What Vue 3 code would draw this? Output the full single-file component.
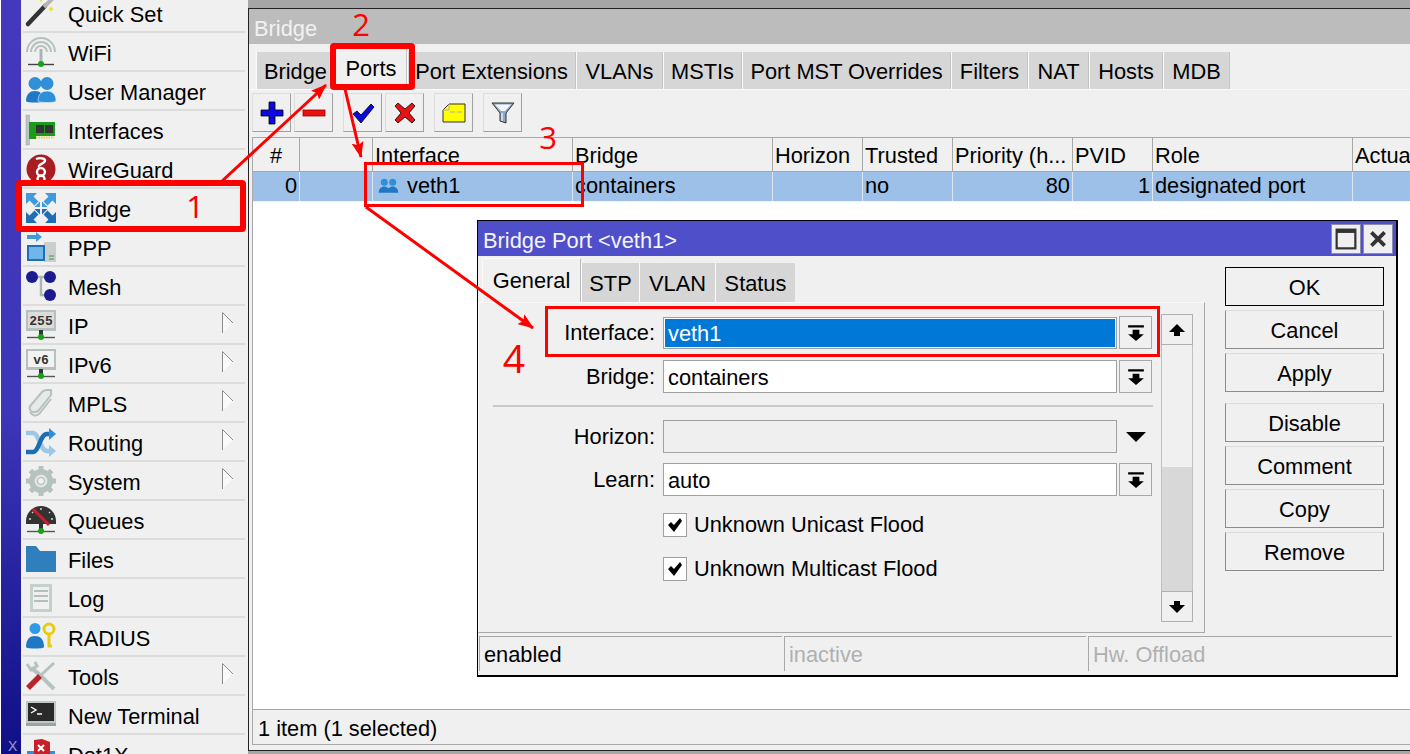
<script setup>
const menu = [
  { n: 'Quick Set', i: 'wand' }, { n: 'WiFi', i: 'wifi' }, { n: 'User Manager', i: 'users' },
  { n: 'Interfaces', i: 'card' }, { n: 'WireGuard', i: 'wg' }, { n: 'Bridge', i: 'bridge' },
  { n: 'PPP', i: 'ppp' }, { n: 'Mesh', i: 'mesh' }, { n: 'IP', i: 'ip', sub: true, t: '255' },
  { n: 'IPv6', i: 'ip', sub: true, t: 'v6' }, { n: 'MPLS', i: 'mpls', sub: true },
  { n: 'Routing', i: 'routing', sub: true }, { n: 'System', i: 'gear', sub: true },
  { n: 'Queues', i: 'queues' }, { n: 'Files', i: 'files' }, { n: 'Log', i: 'log' },
  { n: 'RADIUS', i: 'radius' }, { n: 'Tools', i: 'tools', sub: true },
  { n: 'New Terminal', i: 'term' }, { n: 'Dot1X', i: 'dot' }
]
const tabs = ['Bridge', 'Ports', 'Port Extensions', 'VLANs', 'MSTIs', 'Port MST Overrides', 'Filters', 'NAT', 'Hosts', 'MDB']
const heads = ['#', '', 'Interface', 'Bridge', 'Horizon', 'Trusted', 'Priority (h...', 'PVID', 'Role', 'Actual Pa']
const dlgTabs = ['STP', 'VLAN', 'Status']
const mainBtns = ['OK', 'Cancel', 'Apply']
const moreBtns = ['Disable', 'Comment', 'Copy', 'Remove']
</script>

<template>
  <div class="screen">
    <aside class="strip"><span class="strip-x">X</span></aside>
    <nav class="menu">
      <div v-for="m in menu" :key="m.n" class="mi">
        <svg class="mi-ic" viewBox="0 0 30 30">
          <template v-if="m.i === 'wand'">
            <path d="M2 26 L19 8" stroke="#333" stroke-width="4.500" stroke-linecap="round" />
            <path d="M18 9 L27 0" stroke="#b5b5b5" stroke-width="4" />
            <path d="M15 -3l1 3 3 1-3 1-1 3-1-3-3-1 3-1zM25 8l.9 2.100 2.100.9-2.100.9-.9 2.100-.9-2.100-2.100-.9 2.100-.9z" fill="#eedc20" />
          </template>
          <template v-else-if="m.i === 'wifi'">
            <path d="M1 15a14 14 0 0 1 28 0M5 15a10 10 0 0 1 20 0M9 15a6 6 0 0 1 12 0" fill="none" stroke="#b4c2bd" stroke-width="2" />
            <rect x="13.500" y="12" width="3" height="14" fill="#a8b5b0" />
            <path d="M2 27.500h26" stroke="#444" stroke-width="1.400" />
            <circle cx="15" cy="27" r="3" fill="#17a317" />
          </template>
          <template v-else-if="m.i === 'users'">
            <circle cx="9" cy="7.500" r="6.500" fill="#2f8fd8" /><circle cx="21" cy="7.500" r="6.500" fill="#2f8fd8" />
            <path d="M0 25c0-7 4-10 9-10s9 3 9 10c0 2-18 2-18 0z" fill="#1f78c4" />
            <path d="M12 25c0-7 4-10 9-10s9 3 9 10c0 2-18 2-18 0z" fill="#2f8fd8" stroke="#f0f0f0" stroke-width=".6" />
          </template>
          <template v-else-if="m.i === 'card'">
            <rect x="0" y="0" width="3.500" height="30" fill="#b8c6c0" stroke="#92a09a" stroke-width=".5" />
            <path d="M3 7h26v14H10v3H3z" fill="#1c9a1c" />
            <rect x="10" y="10" width="8" height="8" fill="#333" /><rect x="19" y="10" width="8" height="8" fill="#333" />
            <path d="M10 22.500h18" stroke="#e3d23c" stroke-width="2" stroke-dasharray="1.500 1" />
          </template>
          <template v-else-if="m.i === 'wg'">
            <circle cx="15" cy="15" r="14.500" fill="#a81c22" />
            <path d="M10 5c5-2 10 0 9 2-1 3-7 3-6 6M15 14a4 4 0 1 1-.1 0M15 21.500a3.500 3.500 0 1 0 .1 0" fill="none" stroke="#fff" stroke-width="2.400" />
          </template>
          <template v-else-if="m.i === 'bridge'">
            <path d="M0 0h11L7.500 3.500l5 5-4 4-5-5L0 11zM30 0H19l3.500 3.500-5 5 4 4 5-5L30 11z" fill="#3f9ade" />
            <path d="M0 30h11l-3.500-3.500 5-5-4-4-5 5L0 19zM30 30H19l3.500-3.500-5-5 4-4 5 5L30 19z" fill="#1f6db5" />
            <path d="M14 14V8.500L8.500 14zM16 14V8.500L21.500 14z" fill="#3f9ade" />
            <path d="M14 16v5.500L8.500 16zM16 16v5.500L21.500 16z" fill="#1f6db5" />
          </template>
          <template v-else-if="m.i === 'ppp'">
            <path d="M1 3h9V0l6 5-6 5V7H1z" fill="#3f9ade" />
            <rect x="18" y="10" width="12" height="20" fill="#c8cfcc" /><path d="M23 24h5M23 27h5" stroke="#3b9e3b" />
            <rect x="1" y="13" width="18" height="16" fill="#1f6db5" /><rect x="3" y="15" width="14" height="12" fill="#6fb7ea" />
          </template>
          <template v-else-if="m.i === 'mesh'">
            <path d="M6 6h18M15 6v18h9" fill="none" stroke="#a9b7b2" stroke-width="2.400" />
            <circle cx="6" cy="6" r="6" fill="#1b1b8f" /><circle cx="24" cy="6" r="6" fill="#1b1b8f" /><circle cx="24" cy="24" r="6" fill="#1b1b8f" />
          </template>
          <template v-else-if="m.i === 'ip'">
            <rect x="0" y="0" width="30" height="21" fill="#b4c2bd" /><rect x="2" y="2" width="26" height="16" :fill="m.t === 'v6' ? '#f2f2f2' : '#dcdcdc'" />
            <text x="15" y="14.500" text-anchor="middle" class="ip-t">{{ m.t }}</text>
            <rect x="13" y="20" width="4" height="7" fill="#333" />
            <path d="M1 27.500h28" stroke="#555" stroke-width="1.400" /><circle cx="15" cy="27" r="3" fill="#17a317" />
          </template>
          <template v-else-if="m.i === 'mpls'">
            <path d="M5 17 L16 4 Q18 2 21 2 L25 2 V7 L13 22 Q9 26 5 23 Q2 20 5 17z" fill="#e6ebe9" stroke="#b5c1bc" stroke-width="2" />
            <path d="M4 24 Q8 30 13 26 L25 11" fill="none" stroke="#b5c1bc" stroke-width="2" />
          </template>
          <template v-else-if="m.i === 'routing'">
            <path d="M0 6h7c6 0 7 18 14 18h3" fill="none" stroke="#9cc7e5" stroke-width="4.500" />
            <path d="M23 18l7 6-7 6z" fill="#9cc7e5" />
            <path d="M0 25h7c6 0 7-18 14-18h3" fill="none" stroke="#1b6eb2" stroke-width="4.500" />
            <path d="M23 1l7 6-7 6z" fill="#2f8fd8" />
          </template>
          <template v-else-if="m.i === 'gear'">
            <circle cx="15" cy="15" r="9" fill="none" stroke="#b5c2bd" stroke-width="6" />
            <path d="M15 0v30M0 15h30M4.400 4.400l21.200 21.200M25.600 4.400 4.400 25.600" stroke="#b5c2bd" stroke-width="5" stroke-dasharray="5 20 5" />
            <circle cx="15" cy="15" r="6.500" fill="#dfe5e2" /><circle cx="15" cy="15" r="3.500" fill="#f0f0f0" stroke="#a9b7b2" />
          </template>
          <template v-else-if="m.i === 'queues'">
            <path d="M0 16a15 15 0 0 1 30 0v3H0z" fill="#333" />
            <path d="M15 3v2M6 7l1 1M24 7l-1 1M3 14h2M27 14h-2" stroke="#ddd" stroke-width="1.400" />
            <path d="M7 4l16 16" stroke="#c8202a" stroke-width="3" />
            <path d="M1 26.500h28" stroke="#555" stroke-width="1.400" /><rect x="13" y="19" width="4" height="6" fill="#333" />
            <circle cx="15" cy="26" r="3" fill="#17a317" />
          </template>
          <template v-else-if="m.i === 'files'">
            <path d="M0 2h10l4 5h16v21H0z" fill="#2f7fbd" /><path d="M13 5.500h15" stroke="#e8f2f8" />
          </template>
          <template v-else-if="m.i === 'log'">
            <rect x="4" y="1" width="22" height="28" fill="#c4d0cb" /><rect x="7" y="4" width="16" height="22" fill="#f0f0f0" />
            <path d="M8 8h14M8 13h14M8 18h14" stroke="#b3bfba" stroke-width="2" />
          </template>
          <template v-else-if="m.i === 'radius'">
            <circle cx="9" cy="6.500" r="5.500" fill="#2f9be6" />
            <path d="M0 25c0-8 4-11 9-11s9 3 9 11c0 2-18 2-18 0z" fill="#1f78c4" />
            <circle cx="23" cy="7" r="5" fill="none" stroke="#e6cd14" stroke-width="3" />
            <path d="M23 11v13h3" fill="none" stroke="#e6cd14" stroke-width="3" />
          </template>
          <template v-else-if="m.i === 'tools'">
            <path d="M5 7c4 2 7 5 23 21" stroke="#b5c2bd" stroke-width="4" fill="none" />
            <path d="M1 3 5 9l6-4-2-4" fill="none" stroke="#b5c2bd" stroke-width="3" />
            <path d="M2 27 14 15" stroke="#b8242c" stroke-width="5.500" />
            <path d="M15 14 28 2" stroke="#b5c2bd" stroke-width="3" />
          </template>
          <template v-else-if="m.i === 'term'">
            <rect x="0" y="1" width="30" height="22" fill="#bfc8c4" /><rect x="2" y="3" width="26" height="18" fill="#2a2a2a" />
            <path d="M5 7l5 3-5 3M11 14h5" fill="none" stroke="#fff" stroke-width="1.400" />
            <rect x="0" y="23" width="30" height="3" fill="#9aa5a1" />
          </template>
          <template v-else>
            <rect x="1" y="12" width="28" height="18" fill="#2f8fd8" /><path d="M8 1l8-1 8 3v12q-3 8-8 10q-6-3-8-10z" fill="#c8202a" />
            <path d="M12 6l6 6M18 6l-6 6" stroke="#fff" stroke-width="2" />
          </template>
        </svg>
        <span class="mi-t">{{ m.n }}</span>
        <svg v-if="m.sub" class="mi-arrow" viewBox="0 0 12 22"><path d="M.5 .5 11 11 .5 21z" fill="#fafafa" /><path d="M.5 21V.5L11 11" fill="none" stroke="#8c8c8c" /></svg>
      </div>
    </nav>

    <section class="desk">
      <div class="desk-top"></div>
      <main class="win">
        <header class="win-title">Bridge</header>
        <div class="win-tabs">
          <div v-for="(t, i) in tabs" :key="t" class="wtab" :class="{ on: i === 1 }">{{ t }}</div>
        </div>
        <div class="toolbar">
          <button class="tb"><svg viewBox="0 0 24 24"><path d="M9 1h6v8h8v6h-8v8H9v-8H1V9h8z" fill="#0a0adf" stroke="#000" stroke-width=".8" /></svg></button>
          <button class="tb"><svg viewBox="0 0 24 24"><rect x="1" y="9" width="22" height="6" fill="#e81212" stroke="#900" stroke-width=".8" /></svg></button>
          <button class="tb tb-gap"><svg viewBox="0 0 24 24"><path d="M2 13l4-3 4 4L20 3l3 3-13 16z" fill="#0a0adf" stroke="#000" stroke-width=".8" /></svg></button>
          <button class="tb"><svg viewBox="0 0 24 24"><path d="M5 2l7 6 7-6 3 3-6 7 6 7-3 3-7-6-7 6-3-3 6-7-6-7z" fill="#e81212" stroke="#000" stroke-width=".8" /></svg></button>
          <button class="tb tb-gap"><svg viewBox="0 0 24 24"><path d="M7 3h16v18H1V9z" fill="#ffff00" stroke="#333" /><path d="M7 3v6H1M8 11h5M15 11h5" fill="none" stroke="#aaa" /></svg></button>
          <button class="tb tb-gap"><svg viewBox="0 0 24 24"><path d="M1 2h22L15 12v10l-6-2v-8z" fill="#8fa8c8" stroke="#333" /><path d="M4 3.500h16L14 10h-4z" fill="#f4f8fa" /><path d="M11 12v8" stroke="#dfe8f2" stroke-width="1.500" /></svg></button>
        </div>
        <div class="tbl">
          <div class="trow thead">
            <div v-for="h in heads" :key="h" class="th" :class="{ c: h === '#' }">{{ h }}</div>
          </div>
          <div class="trow tsel">
            <div class="td r">0</div>
            <div class="td"></div>
            <div class="td ifc">
              <svg viewBox="0 0 30 30" class="ifc-ic"><circle cx="9" cy="9" r="5" fill="#2f8fd8" /><circle cx="21" cy="9" r="5" fill="#2f8fd8" /><path d="M1 24c0-6 4-9 8-9s8 3 8 9zM13 24c0-6 4-9 8-9s8 3 8 9z" fill="#1f78c4" /></svg>
              veth1
            </div>
            <div class="td">containers</div>
            <div class="td"></div>
            <div class="td">no</div>
            <div class="td r">80</div>
            <div class="td r">1</div>
            <div class="td">designated port</div>
            <div class="td"></div>
          </div>
          <div class="tbl-empty"></div>
        </div>
        <footer class="win-status">1 item (1 selected)</footer>
      </main>
    </section>

    <div class="dlg">
      <header class="dlg-title">
        <span class="dlg-name">Bridge Port &lt;veth1&gt;</span>
        <button class="dlg-b"><svg viewBox="0 0 20 20"><rect x="1.500" y="1.500" width="17" height="17" fill="none" stroke="#333" stroke-width="2" /><path d="M1 3h18" stroke="#333" stroke-width="3" /></svg></button>
        <button class="dlg-b"><svg viewBox="0 0 20 20"><path d="M4 4l12 12M16 4 4 16" stroke="#333" stroke-width="3.400" /></svg></button>
      </header>
      <div class="dlg-body">
        <div class="dlg-left">
          <div class="dtabs">
            <div class="dtab on">General</div>
            <div v-for="t in dlgTabs" :key="t" class="dtab">{{ t }}</div>
          </div>
          <div class="dpanel">
            <div class="form">
              <div class="fr r1">
                <label>Interface:</label>
                <div class="inp sel">veth1</div>
                <button class="dd"><svg viewBox="0 0 16 16"><path d="M1 1h14v2H1zM5 5h6v4h4l-7 6-7-6h4z" /></svg></button>
              </div>
              <div class="fr">
                <label>Bridge:</label>
                <div class="inp">containers</div>
                <button class="dd"><svg viewBox="0 0 16 16"><path d="M1 1h14v2H1zM5 5h6v4h4l-7 6-7-6h4z" /></svg></button>
              </div>
              <div class="sep"></div>
              <div class="fr">
                <label>Horizon:</label>
                <div class="inp off"></div>
                <span class="dd-flat"><svg viewBox="0 0 20 10"><path d="M0 0h20L10 10z" /></svg></span>
              </div>
              <div class="fr fr-learn">
                <label>Learn:</label>
                <div class="inp">auto</div>
                <button class="dd"><svg viewBox="0 0 16 16"><path d="M1 1h14v2H1zM5 5h6v4h4l-7 6-7-6h4z" /></svg></button>
              </div>
              <div class="chk"><span class="box"><svg viewBox="0 0 16 16"><path d="M1 8l3-3 3 3 6-7 2 3-8 11z" /></svg></span>Unknown Unicast Flood</div>
              <div class="chk"><span class="box"><svg viewBox="0 0 16 16"><path d="M1 8l3-3 3 3 6-7 2 3-8 11z" /></svg></span>Unknown Multicast Flood</div>
            </div>
            <div class="sbar">
              <div class="sb-btn"><svg viewBox="0 0 16 12"><path d="M8 0l8 8h-5v4H5V8H0z" /></svg></div>
              <div class="sb-track"></div>
              <div class="sb-thumb"></div>
              <div class="sb-btn"><svg viewBox="0 0 16 12"><path d="M5 0h6v4h5l-8 8-8-8h5z" /></svg></div>
            </div>
          </div>
        </div>
        <div class="dlg-btns">
          <div class="bgroup">
            <button v-for="(b, i) in mainBtns" :key="b" class="btn" :class="{ def: i === 0 }">{{ b }}</button>
          </div>
          <div class="bgroup">
            <button v-for="b in moreBtns" :key="b" class="btn">{{ b }}</button>
          </div>
        </div>
      </div>
      <div class="dstatus">
        <div class="ds">enabled</div>
        <div class="ds dim">inactive</div>
        <div class="ds dim">Hw. Offload</div>
      </div>
    </div>

    <svg class="notes" viewBox="0 0 1410 754" width="1410" height="754">
      <defs>
        <marker id="ah" markerWidth="16" markerHeight="12" refX="15" refY="6" orient="auto" markerUnits="userSpaceOnUse"><path d="M0 0 16 6 0 12 3 6z" fill="#f00" /></marker>
      </defs>
      <g fill="none" stroke="#f00">
        <rect x="19" y="183" width="224" height="46" stroke-width="6" rx="1" />
        <rect x="333" y="46" width="79" height="41" stroke-width="6" rx="1" />
        <rect x="365.500" y="163.500" width="217" height="42" stroke-width="3" />
        <rect x="546.500" y="307.500" width="612" height="48" stroke-width="3" />
        <path d="M221 182 326 85" stroke-width="3" marker-end="url(#ah)" />
        <path d="M345 89 361 157" stroke-width="3" marker-end="url(#ah)" />
        <path d="M366 207 533 328" stroke-width="3" marker-end="url(#ah)" />
      </g>
      <text x="195" y="218" class="num">1</text>
      <text x="361" y="36" class="num">2</text>
      <text x="548" y="149" class="num">3</text>
      <text x="514" y="373" class="num big">4</text>
    </svg>
  </div>
</template>

<style>
html, body { margin: 0; background: #fff; }
</style>

<style scoped>
.screen { position: relative; width: 1410px; height: 754px; overflow: hidden; display: flex; background: #fff; font-family: "Liberation Sans", Arial, sans-serif; font-size: 21.8px; color: #000; }
.strip { width: 20px; margin-left: 1px; flex: none; background: linear-gradient(#4438bd, #3d36b8 55%, #0f0f86); position: relative; }
.strip-x { position: absolute; left: 7px; bottom: 0; font-size: 14px; color: #9a9ad8; }
.menu { width: 227px; flex: none; background: #f0f0f0; margin-top: -6px; padding-left: 2px; box-sizing: border-box; height: 760px; }
.mi { display: flex; align-items: center; height: 37px; border-bottom: 2px solid #dcdcdc; margin-right: 3px; position: relative; }
.mi-ic { width: 30px; height: 30px; margin-left: 3px; flex: none; overflow: visible; }
.mi-t { margin-left: 12px; padding-top: 4px; }
.mi-arrow { position: absolute; left: 199px; top: 6px; width: 12px; height: 22px; }
.ip-t { font: bold 13px "Liberation Mono", monospace; fill: #333; }
.desk { flex: 1; min-width: 0; background: #a6a6a6; display: flex; flex-direction: column; }
.desk-top { height: 8px; flex: none; border-bottom: 1px solid #222; }
.win { flex: none; height: 742px; box-sizing: border-box; border-left: 1px solid #222; border-bottom: 1px solid #222; background: #f0f0f0; display: flex; flex-direction: column; overflow: hidden; }
.win-title { height: 35px; line-height: 40px; background: #bcbcbc; color: #f2f2f2; padding-left: 5px; flex: none; }
.win-tabs { display: grid; grid-template-columns: 79px 72px 169px 87px 79px 209px 77px 61px 74px 67px; height: 46px; box-sizing: border-box; border-bottom: 1px solid #fafafa; padding-left: 7px; flex: none; align-items: end; }
.wtab { height: 37px; line-height: 40px; background: #d6d6d6; border-left: 1px solid #fafafa; border-right: 1px solid #c4c4c4; box-sizing: border-box; text-align: center; white-space: nowrap; }
.wtab.on { height: 40px; line-height: 39px; background: #f0f0f0; }
.toolbar { display: flex; height: 47px; padding: 3px 0 0 3px; gap: 3px; box-sizing: border-box; flex: none; }
.tb { width: 39px; height: 39px; padding: 0; background: #f0f0f0; border: 1px solid; border-color: #dcdcdc #a0a0a0 #a0a0a0 #dcdcdc; display: flex; align-items: center; justify-content: center; }
.tb svg { width: 24px; height: 24px; }
.tb-gap { margin-left: 7px; }
.tbl { flex: 1; margin-left: 3px; background: #fff; display: flex; flex-direction: column; border-top: 1px solid #a8a8a8; border-left: 1px solid #a8a8a8; min-height: 0; }
.trow { display: grid; grid-template-columns: 47px 73px 200px 200px 90px 90px 120px 80px 200px 60px; flex: none; }
.thead { height: 33px; background: #f0f0f0; border-bottom: 1px solid #a8a8a8; }
.th { line-height: 35px; padding-left: 2px; border-right: 1px solid #a8a8a8; white-space: nowrap; overflow: hidden; }
.th.c { text-align: center; padding: 0; }
.tsel { height: 29px; background: #9dc0e8; border-bottom: 1px solid #f4f4f4; }
.td { padding: 0 2px 1px; border-right: 1px solid #dde6f0; white-space: nowrap; overflow: hidden; display: flex; align-items: center; }
.td.r { justify-content: flex-end; }
.ifc { padding-left: 5px; gap: 8px; }
.ifc-ic { width: 21px; height: 21px; }
.tbl-empty { flex: 1; }
.win-status { flex: none; height: 34px; line-height: 37px; padding-left: 5px; margin: 0 0 5px 3px; border: 1px solid #a8a8a8; border-width: 1px 0 1px 1px; }
.dlg { position: absolute; left: 477px; top: 220px; width: 921px; height: 457px; box-sizing: border-box; border: 1px solid #000; border-width: 1px 2px 2px 1px; background: #f0f0f0; display: flex; flex-direction: column; }
.dlg-title { height: 35px; background: #4f4fca; display: flex; align-items: center; gap: 2px; padding-right: 3px; flex: none; }
.dlg-name { flex: 1; color: #f4f4f4; padding: 5px 0 0 5px; }
.dlg-b { width: 30px; height: 30px; padding: 0; background: #efefef; border: 1px solid #8c8cb0; display: flex; align-items: center; justify-content: center; }
.dlg-b svg { width: 22px; height: 22px; }
.dlg-body { flex: 1; display: flex; min-height: 0; }
.dlg-left { width: 727px; flex: none; display: flex; flex-direction: column; }
.dtabs { display: grid; grid-template-columns: 99px 58px 76px 80px; height: 46px; padding-left: 4px; align-items: end; flex: none; }
.dtab { height: 39px; line-height: 41px; background: #d6d6d6; border-left: 1px solid #fafafa; text-align: center; box-sizing: border-box; }
.dtab.on { height: 44px; line-height: 43px; background: #f0f0f0; border-top: 1px solid #fafafa; border-right: 1px solid #bbb; }
.dpanel { flex: 1; border: 1px solid #fafafa; border-right-color: #a8a8a8; border-bottom-color: #a8a8a8; display: flex; padding: 11px 10px 10px 14px; }
.form { width: 661px; flex: none; margin-right: 7px; }
.fr { display: grid; grid-template-columns: 163px 454px 35px; column-gap: 8px; height: 33px; align-items: center; margin-bottom: 10px; margin-left: -1px; }
.r1 { margin: 2px 0 11px -1px; }
.fr label { text-align: right; }
.inp { height: 33px; line-height: 33px; background: #fff; border: 1px solid #a0a0a0; box-sizing: border-box; padding-left: 4px; }
.r1 .inp { height: 32px; line-height: 31px; }
.inp.sel { background: #0078d7; color: #fff; box-shadow: inset 0 0 0 1px #fff; }
.inp.off { background: #efefef; }
.dd { width: 33px; height: 33px; padding: 0; margin-left: -6px; background: #f0f0f0; border: 1px solid #a8a8a8; display: flex; align-items: center; justify-content: center; }
.dd svg { width: 18px; height: 18px; }
.dd-flat { display: flex; justify-content: center; margin-left: -6px; width: 33px; }
.dd-flat svg { width: 20px; height: 10px; }
.sep { border-top: 2px solid #c8c8c8; margin: 12px 0 13px 0; width: 660px; }
.fr-learn { margin-bottom: 17px; }
.chk { display: flex; align-items: center; gap: 7px; height: 24px; margin: 0 0 20px 170px; }
.box { width: 24px; height: 24px; box-sizing: border-box; background: #fff; border: 1px solid #a0a0a0; display: flex; align-items: center; justify-content: center; }
.box svg { width: 16px; height: 16px; }
.sbar { width: 32px; height: 308px; flex: none; display: flex; flex-direction: column; }
.sb-btn { height: 31px; background: #f0f0f0; border: 1px solid #b0b0b0; box-sizing: border-box; display: flex; align-items: center; justify-content: center; flex: none; }
.sb-btn svg { width: 16px; height: 12px; }
.sb-track { height: 122px; border: 1px solid #c0c0c0; border-width: 0 1px; background: #f0f0f0; flex: none; }
.sb-thumb { flex: 1; background: #d8d8d8; border: 1px solid #c0c0c0; border-width: 0 1px; }
.dlg-btns { flex: 1; display: flex; flex-direction: column; padding: 11px 0 0 20px; gap: 11px; }
.bgroup { display: flex; flex-direction: column; gap: 4px; }
.btn { width: 159px; height: 39px; padding: 2px 0 0; background: #f0f0f0; border: 1px solid; border-color: #dcdcdc #8c8c8c #8c8c8c #8c8c8c; font: inherit; color: #000; }
.btn.def { border-color: #000; }
.dstatus { height: 42px; display: grid; grid-template-columns: 305px 304px 306px; flex: none; padding: 3px 4px 4px 1px; box-sizing: border-box; }
.ds { height: 35px; line-height: 36px; border-left: 1px solid #a8a8a8; border-top: 1px solid #a8a8a8; padding-left: 4px; margin-right: 2px; box-sizing: border-box; }
.ds.dim { color: #b0b0b0; }
.notes { position: absolute; left: 0; top: 0; pointer-events: none; }
.num { font: 400 31px "Open Sans", "Liberation Sans", sans-serif; fill: #f00; text-anchor: middle; }
.num.big { font-size: 39px; }
</style>
